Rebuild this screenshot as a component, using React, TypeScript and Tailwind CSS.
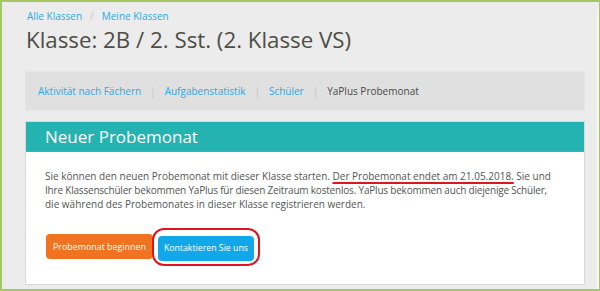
import React from "react";

export default function App() {
  const font = { fontFamily: '"Open Sans", "Noto Sans", sans-serif' };
  return (
    <div className="w-[600px] h-[291px] bg-[#ececec] border-l-2 border-t-2 border-b-2 border-r border-[#a3c85f] overflow-hidden" style={font}>
      <div className="h-full border-r-2 border-[#f6f6f6] pl-[23px] pr-[12px]">
        <div className="mt-[7px] pl-[2px] flex items-center text-[10px] leading-[14px]">
          <span className="text-[#2aaae2]">Alle Klassen</span>
          <span className="text-[#c4c4c4] mx-[8px]">/</span>
          <span className="text-[#2aaae2]">Meine Klassen</span>
        </div>
        <h1 className="mt-[2px] pl-[1px] text-[22.3px] leading-[30px] text-[#4e4e46] font-normal">
          Klasse: 2B / 2. Sst. (2. Klasse VS)
        </h1>
        <div className="mt-[16px] h-[40px] bg-[#e0e0e0] border border-[#e6e6e6] flex items-center pl-[12px] text-[10px] leading-[14px]">
          <span className="text-[#2aaae2]">Aktivität nach Fächern</span>
          <span className="text-[#c4c4c4] mx-[9px]">|</span>
          <span className="text-[#2aaae2]">Aufgabenstatistik</span>
          <span className="text-[#c4c4c4] mx-[9px]">|</span>
          <span className="text-[#2aaae2]">Schüler</span>
          <span className="text-[#c4c4c4] mx-[9px]">|</span>
          <span className="text-[#4a4a4a]">YaPlus Probemonat</span>
        </div>
        <div className="mt-[10px] bg-white border border-[#d8d8d8]">
          <div className="h-[30px] bg-[#24b3b1] border-b border-[#2bbcb9] flex items-center pl-[19px] text-white text-[17px] leading-[24px]">
            Neuer Probemonat
          </div>
          <div className="pl-[19px] pr-[8px] pt-[17px] pb-[23px]">
            <p className="text-[10px] leading-[14px] text-[#555555] whitespace-nowrap">
              Sie können den neuen Probemonat mit dieser Klasse starten.{" "}
              <span className="underline decoration-[#e2141c] decoration-[1.5px] underline-offset-[2px]">
                Der Probemonat endet am 21.05.2018.
              </span>{" "}
              Sie und
              <br />
              <span className="tracking-[-0.2px]">
                Ihre Klassenschüler bekommen YaPlus für diesen Zeitraum kostenlos. YaPlus bekommen auch diejenige Schüler,
              </span>
              <br />
              die während des Probemonates in dieser Klasse registrieren werden.
            </p>
            <div className="mt-[22px] flex items-center gap-[5px] pl-[1px]">
              <button className="h-[25px] px-[7px] rounded-[4px] bg-[#f07322] text-white text-[8.9px] leading-[14px]">
                Probemonat beginnen
              </button>
              <div className="relative">
                <div className="absolute -inset-x-[6px] -inset-y-[5px] border-2 border-[#e1141e] rounded-[12px]" />
                <button className="relative h-[25px] px-[6px] rounded-[4px] bg-[#11a8ea] text-white text-[8.75px] leading-[14px]">
                  Kontaktieren Sie uns
                </button>
              </div>
            </div>
          </div>
        </div>
      </div>
    </div>
  );
}
